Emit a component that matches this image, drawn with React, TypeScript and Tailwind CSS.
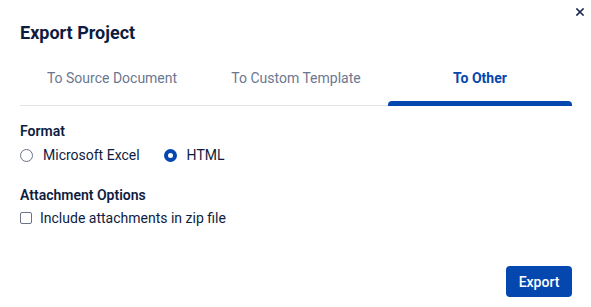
import { useState } from 'react'

const tabs = ['To Source Document', 'To Custom Template', 'To Other']

function Radio({ checked }: { checked: boolean }) {
  return checked ? (
    <span className="w-[13px] h-[13px] rounded-full border-[4px] border-[#0447ae] bg-white shrink-0" />
  ) : (
    <span className="w-[13px] h-[13px] rounded-full border-[1.5px] border-[#6b7386] bg-white shrink-0" />
  )
}

export default function App() {
  const [tab, setTab] = useState(2)
  const [format, setFormat] = useState('html')
  const [zip, setZip] = useState(false)

  return (
    <div
      className="relative w-[591px] h-[307px] bg-white pt-[21px] pl-5 pr-[19px] text-[#0e1c3f]"
      style={{ fontFamily: 'Roboto, "Liberation Sans", sans-serif' }}
    >
      {/* close */}
      <button className="absolute top-[8px] right-[7px] w-2 h-2 text-[#1a2850]">
        <svg viewBox="0 0 8 8" className="w-2 h-2" fill="none" stroke="currentColor" strokeWidth="1.6" strokeLinecap="square">
          <path d="M1 1L7 7M7 1L1 7" />
        </svg>
      </button>

      <h2 className="text-[18px] leading-6 font-bold">Export Project</h2>

      {/* tabs */}
      <div className="mt-[23px] flex border-b border-[#e2e4e8]">
        {tabs.map((t, i) => (
          <button
            key={t}
            onClick={() => setTab(i)}
            className={`relative flex-1 text-center text-sm leading-5 pb-[17px] ${
              tab === i ? 'text-[#0447ae] font-bold' : 'text-[#6b7790]'
            }`}
          >
            {t}
            {tab === i && (
              <span className="absolute left-0 right-0 bottom-[-1px] h-[5px] rounded-t-[4px] bg-[#0447ae]" />
            )}
          </button>
        ))}
      </div>

      {/* format */}
      <div className="mt-[15px] text-sm leading-5 font-semibold">Format</div>
      <div className="mt-[4px] flex items-center gap-[24px] text-sm leading-5">
        <label className="flex items-center gap-[10px] cursor-pointer" onClick={() => setFormat('excel')}>
          <Radio checked={format === 'excel'} />
          Microsoft Excel
        </label>
        <label className="flex items-center gap-[10px] cursor-pointer" onClick={() => setFormat('html')}>
          <Radio checked={format === 'html'} />
          HTML
        </label>
      </div>

      {/* attachments */}
      <div className="mt-[20px] text-sm leading-5 font-semibold">Attachment Options</div>
      <label className="mt-[3px] flex items-center gap-[8px] text-sm leading-5 cursor-pointer" onClick={() => setZip(!zip)}>
        <span
          className={`w-3 h-3 rounded-[2px] border-[1.5px] shrink-0 ${
            zip ? 'bg-[#0447ae] border-[#0447ae]' : 'border-[#6b7386] bg-white'
          }`}
        />
        Include attachments in zip file
      </label>

      <div className="mt-[38px] flex justify-end">
        <button className="w-[66px] h-[31px] rounded-[4px] bg-[#0447ae] text-white text-sm font-medium">
          Export
        </button>
      </div>
    </div>
  )
}
